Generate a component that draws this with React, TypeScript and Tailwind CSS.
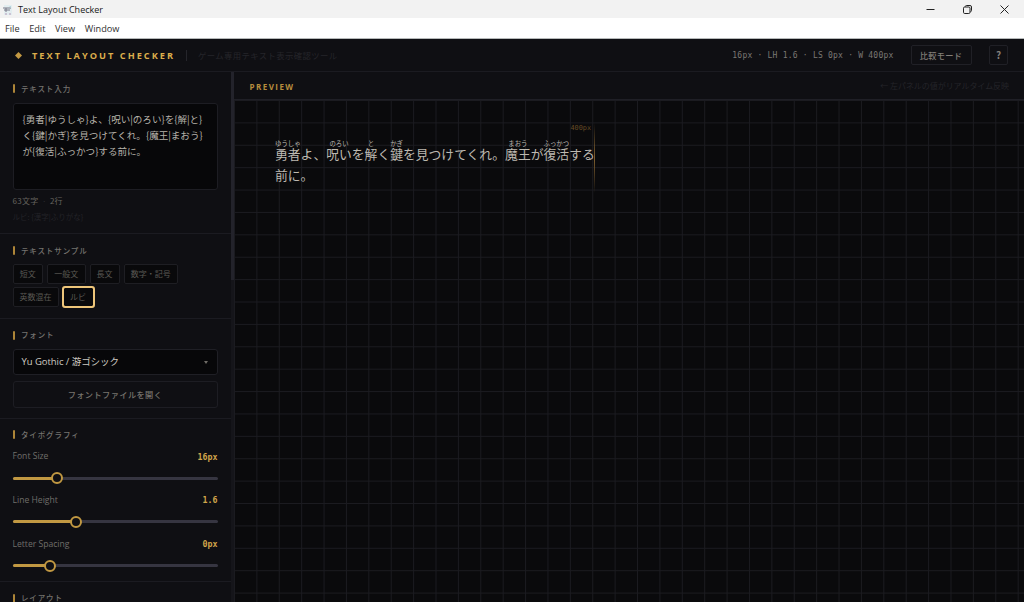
import React from "react";

const samples = [
    { label: '短文', width: 'w-[30.5px]' },
    { label: '一般文', width: 'w-[38.5px]' },
    { label: '長文', width: 'w-[30px]' },
    { label: '数字・記号', width: 'w-[54.5px]' },
    { label: '英数混在', width: 'w-[46px]' },
    { label: 'ルビ', width: 'w-[31px]', active: true },
]

const sliders = [
    { label: 'Font Size', value: '16px', percent: 21.7 },
    { label: 'Line Height', value: '1.6', percent: 31.1 },
    { label: 'Letter Spacing', value: '0px', percent: 18.5 },
]

const previewText: [string, string?][] = [
    ['勇者', 'ゆうしゃ'], ['よ、'], ['呪い', 'のろい'], ['を'], ['解', 'と'], ['く'], ['鍵', 'かぎ'],
    ['を見つけてくれ。'], ['魔王', 'まおう'], ['が'], ['復活', 'ふっかつ'], ['する前に。'],
]

const SectionTitle = ({ children }: { children: React.ReactNode }) => (
    <h2 className="flex items-center h-[10px] gap-[6px] text-[7.5px] leading-[10px] tracking-[0.9px] font-medium text-[#75736f] whitespace-nowrap">
        <span className="w-[2.4px] h-[9px] rounded-[1px] bg-[#ad8538]" />
        {children}
    </h2>
)

const WindowBar = () => (
    <div className="font-['Open_Sans','Noto_Sans',sans-serif] shrink-0">
        <div className="h-[18px] bg-[#f2f2f2] flex items-center pl-[2px] text-[9px] text-[#191919]">
            <svg width="11" height="12" viewBox="0 0 11 12" className="mr-[5px] mt-[2px]">
                <path d="M2 1h8v10H2z" fill="#e3edf0" />
                <path d="M1 4h8M2 6h6M4 4v4" stroke="#797887" strokeWidth="1" />
                <path d="M3 10h2M7 10h2" stroke="#b39ab9" strokeWidth="1" />
                <path d="M7 2h2v2" fill="#b9d9e1" />
            </svg>
            <span className="pt-[2px]">Text Layout Checker</span>
            <svg width="9" height="9" viewBox="0 0 9 9" fill="none" stroke="#222" strokeWidth="1" className="ml-auto">
                <path d="M.5 4.5h8" />
            </svg>
            <svg width="9" height="9" viewBox="0 0 9 9" fill="none" stroke="#222" strokeWidth="1" className="ml-[28px]">
                <rect x=".5" y="2" width="6.5" height="6.5" rx="1.2" />
                <path d="M2.2 1.6Q2.4.5 3.6.5H7Q8.5.5 8.5 2v3.4q0 1.2-1.1 1.4" />
            </svg>
            <svg width="9" height="9" viewBox="0 0 9 9" fill="none" stroke="#222" strokeWidth="1" className="ml-[28px] mr-[15px]">
                <path d="m.5.5 8 8M8.5.5l-8 8" />
            </svg>
        </div>
        <div className="h-[21px] bg-white border-b border-[#b6b9b9] flex items-center gap-[9.6px] pl-[5px] pt-[2px] text-[9.2px] text-[#303030]">
            <span>File</span>
            <span>Edit</span>
            <span>View</span>
            <span>Window</span>
        </div>
    </div>
)

const Header = () => (
    <header className="h-[33px] shrink-0 flex items-center bg-[#0f0f13] border-b border-[#1b1b21] pl-[15px] pr-[16px] whitespace-nowrap">
        <svg width="7" height="7" viewBox="0 0 7 7" className="mr-[10px]">
            <path d="M3.5 0 7 3.5 3.5 7 0 3.5z" fill="#c39943" />
        </svg>
        <h1 className="pt-[2px] font-['Open_Sans',sans-serif] text-[9.2px] font-bold tracking-[2.02px] text-[#dbad4c]">TEXT LAYOUT CHECKER</h1>
        <span className="w-px h-[11px] ml-[10.5px] mr-[11.5px] bg-[#25252b]" />
        <span className="text-[8.4px] tracking-[0.36px] text-[#25252a]">ゲーム専用テキスト表示確認ツール</span>
        <span className="ml-auto pt-[2px] font-['DejaVu_Sans_Mono',monospace] text-[8px] tracking-[0.22px] text-[#7b7873]">16px · LH 1.6 · LS 0px · W 400px</span>
        <button className="ml-[17px] w-[61px] h-[20px] border border-[#202026] rounded-[2px] text-[8.2px] font-medium tracking-[0.35px] text-[#827e79]">比較モード</button>
        <button className="ml-[17.5px] w-[19px] h-[20px] border border-[#202026] rounded-[2px] text-[10px] leading-none font-bold text-[#827e79]">?</button>
    </header>
)

const Slider = ({ label, value, percent }: { label: string; value: string; percent: number }) => (
    <div className="h-[43.7px]">
        <div className="h-[14px] pt-[2.5px] flex items-center justify-between">
            <span className="font-['Open_Sans',sans-serif] text-[8.6px] text-[#706e6a]">{label}</span>
            <span className="font-['DejaVu_Sans_Mono',monospace] text-[8.3px] font-bold text-[#d1a54b]">{value}</span>
        </div>
        <div className="relative mt-[14.3px] h-[3px] rounded-full bg-[#363541]">
            <div className="h-full rounded-full bg-[#c19842]" style={{ width: `${percent}%` }} />
            <div
                className="absolute top-1/2 size-[12px] -translate-x-1/2 -translate-y-1/2 rounded-full border-2 border-[#c19842] bg-[#0f0f13]"
                style={{ left: `${percent}%` }}
            />
        </div>
    </div>
)

const Sidebar = () => (
    <aside className="w-[234px] shrink-0 flex bg-[#0f0f13] overflow-hidden">
        <div className="w-[231px]">
            <section className="h-[162px] border-b border-[#1b1b21] pl-[12.5px] pr-[13.5px] pt-[11.5px]">
                <SectionTitle>テキスト入力</SectionTitle>
                <div className="mt-[9.5px] h-[87px] border border-[#1d1d23] rounded-[3px] bg-[#070709] px-[9px] pt-[7px] text-[9.55px] leading-[16px] text-[#b6b2aa] whitespace-nowrap">
                    <p>{'{勇者|ゆうしゃ}よ、{呪い|のろい}を{解|と}'}</p>
                    <p>{'く{鍵|かぎ}を見つけてくれ。{魔王|まおう}'}</p>
                    <p>{'が{復活|ふっかつ}する前に。'}</p>
                </div>
                <div className="mt-[4.5px] h-[12px] flex items-center gap-[3.5px] text-[8px] text-[#66645f]">
                    <span className="tracking-[0.3px]">63文字</span>
                    <span className="text-[#2c2c31]">·</span>
                    <span>2行</span>
                </div>
                <p className="mt-[5.5px] text-[7.5px] leading-[10px] text-[#232328]">{'ルビ: {漢字|ふりがな}'}</p>
            </section>
            <section className="h-[84.5px] border-b border-[#1b1b21] pl-[12.5px] pr-[13.5px] pt-[11.5px]">
                <SectionTitle>テキストサンプル</SectionTitle>
                <div className="mt-[8.5px] flex flex-wrap gap-x-[4px] gap-y-[3.5px]">
                    {samples.map((sample) => (
                        <button
                            key={sample.label}
                            className={`${sample.width} h-[19.5px] rounded-[2px] border bg-[#09090b] text-[8px] text-[#5b5954] whitespace-nowrap ${sample.active ? 'border-[#d69d35] outline-2 -outline-offset-1 outline-[#edc57a]' : 'border-[#1e1e23]'}`}
                        >
                            {sample.label}
                        </button>
                    ))}
                </div>
            </section>
            <section className="h-[100px] border-b border-[#1b1b21] pl-[12.5px] pr-[13.5px] pt-[11.5px]">
                <SectionTitle>フォント</SectionTitle>
                <div className="mt-[9px] h-[26px] flex items-center justify-between border border-[#1f1f25] rounded-[3px] bg-[#070709] pl-[8px] pr-[9px] font-['Open_Sans','Noto_Sans_CJK_JP',sans-serif] text-[9.5px] text-[#cfcbc3]">
                    <span className="pt-px tracking-[-0.05px]">Yu Gothic / 游ゴシック</span>
                    <svg width="4" height="3" viewBox="0 0 4 3">
                        <path d="M0 0h4L2 3z" fill="#6f6c67" />
                    </svg>
                </div>
                <button className="mt-[6px] w-full h-[27px] border border-[#1d1d23] rounded-[3px] text-[8.2px] font-medium tracking-[0.42px] text-[#77746e]">フォントファイルを開く</button>
            </section>
            <section className="h-[163.5px] border-b border-[#1b1b21] pl-[12.5px] pr-[13.5px] pt-[11px]">
                <SectionTitle>タイポグラフィ</SectionTitle>
                <div className="mt-[9px]">
                    {sliders.map((slider) => (
                        <Slider key={slider.label} {...slider} />
                    ))}
                </div>
            </section>
            <section className="pl-[12.5px] pr-[13.5px] pt-[11px]">
                <SectionTitle>レイアウト</SectionTitle>
            </section>
        </div>
        <div className="w-[3px] bg-[#15151a]">
            <div className="h-[208px] bg-[#23232b]" />
        </div>
    </aside>
)

const Preview = () => (
    <main className="flex-1 flex flex-col min-w-0">
        <div className="h-[27.5px] shrink-0 flex items-center justify-between bg-[#0f0f13] border-b border-[#1f1f26] pl-[15.5px] pr-[15px]">
            <span className="pt-[3px] font-['Open_Sans',sans-serif] text-[8px] font-bold tracking-[1.45px] text-[#b78d3d]">PREVIEW</span>
            <span className="pt-px text-[8px] tracking-[-0.05px] text-[#242429]">← 左パネルの値がリアルタイム反映</span>
        </div>
        <div className="flex-1 bg-[#0a0a0c] bg-[linear-gradient(#1b1b20_1px,transparent_1px),linear-gradient(90deg,#1b1b20_1px,transparent_1px)] bg-size-[22.4px_22.4px] pt-[40.5px] pl-[41px]">
            <div className="relative w-[320px] text-[12.8px] leading-[20.5px] text-[#bdb9b1]">
                <p className="w-[321px]">
                    {previewText.map(([base, reading], i) => reading ? (
                        <ruby key={i} className="[ruby-align:center]">{base}<rt className="text-[6.4px] leading-[7px]">{reading}</rt></ruby>
                    ) : (
                        <React.Fragment key={i}>{base}</React.Fragment>
                    ))}
                </p>
                {/* width guide */}
                <span className="absolute right-[4px] top-[-17px] font-['DejaVu_Sans_Mono',monospace] text-[6.8px] leading-[10px] text-[#674b25]">400px</span>
                <div className="absolute right-0 top-[-17px] w-px h-[70px] bg-linear-to-b from-transparent via-[#80602f] to-transparent" />
            </div>
        </div>
    </main>
)

export default function App() {
    return (
        <div className="w-[1024px] h-[602px] flex flex-col overflow-hidden bg-[#0a0a0c] font-['Noto_Sans_CJK_JP',sans-serif]">
            <WindowBar />
            <Header />
            <div className="flex-1 flex min-h-0">
                <Sidebar />
                <Preview />
            </div>
        </div>
    );
}
